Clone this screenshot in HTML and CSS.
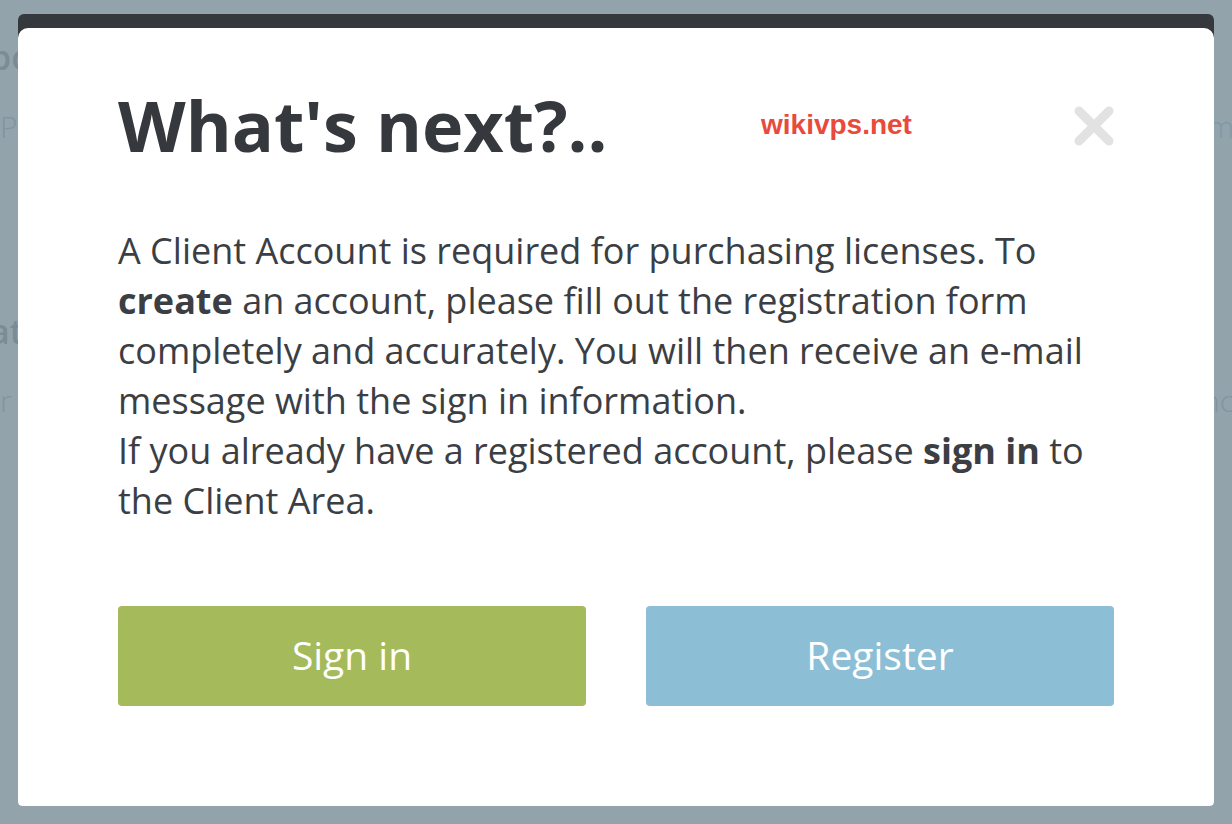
FILE: index.html
```html
<!DOCTYPE html>
<html>
<head>
  <title>What's next?</title>
  <link rel="stylesheet" href="styles.css">
</head>
<body>
  <div class="page">
    <div class="page-row row-1"><span class="bold shift">bo</span><span></span></div>
    <div class="page-row row-2"><span class="light">PA</span><span class="light blue">m</span></div>
    <div class="page-row row-3"><span class="bold shift">at</span><span></span></div>
    <div class="page-row row-4"><span class="light">r h</span><span class="light">nc</span></div>
  </div>

  <div class="overlay">
    <div class="modal">
      <div class="modal-body">
        <div class="modal-head">
          <h1>What's next?..</h1>
          <span class="watermark">wikivps.net</span>
          <a class="close" href="#" aria-label="Close">
            <svg width="40" height="40" viewBox="0 0 40 40">
              <path d="M5 5 L35 35 M35 5 L5 35" stroke="#e2e2e2" stroke-width="9" stroke-linecap="round" fill="none"/>
            </svg>
          </a>
        </div>
        <p class="text">
          A Client Account is required for purchasing licenses. To <b>create</b> an account, please fill out the registration form completely and accurately. You will then receive an e-mail message with the sign in information.<br>
          If you already have a registered account, please <b>sign in</b> to the Client Area.
        </p>
        <div class="actions">
          <a href="#" class="btn btn-green">Sign in</a>
          <a href="#" class="btn btn-blue">Register</a>
        </div>
      </div>
    </div>
  </div>
</body>
</html>
```

FILE: styles.css
```css
body {
  margin: 0;
  padding: 0;
  background-color: #92a3ab;
  font-family: "Open Sans", Arial, sans-serif;
  height: 824px;
  overflow: hidden;
}
.page {
  color: #7c8c94;
  font-size: 30px;
}
.page-row {
  display: flex;
  justify-content: space-between;
  margin-left: 0;
  margin-right: -2px;
  line-height: 40px;
}
.row-1 { padding-top: 37px; }
.row-2 { padding-top: 30px; }
.row-3 { padding-top: 164px; }
.row-4 { padding-top: 30px; }
.bold { font-weight: 600; font-size: 34px; }
.shift { margin-left: -10px; }
.light { font-weight: 300; color: #8393a0; }
.blue { color: #7f98a8; }

.overlay {
  position: absolute;
  top: 14px;
  left: 18px;
  width: 1196px;
}
.modal {
  background-color: #35383d;
  border-radius: 6px 6px 4px 4px;
  padding-top: 14px;
}
.modal-body {
  background-color: #fff;
  border-radius: 10px 10px 4px 4px;
  padding: 55px 100px 100px 100px;
}
.modal-head {
  position: relative;
  display: flex;
  justify-content: space-between;
  align-items: flex-start;
}
.modal-head h1 {
  margin: 0;
  font-size: 70px;
  line-height: 84px;
  font-weight: 700;
  color: #35383d;
}
.watermark {
  position: absolute;
  left: 643px;
  top: 26px;
  font-family: "Liberation Sans", Arial, sans-serif;
  font-weight: 700;
  font-size: 28px;
  color: #e84a3c;
}
.close {
  display: block;
  width: 40px;
  height: 40px;
  margin-top: 23px;
}
.close svg {
  display: block;
}
.text {
  margin: 59px 0 0 0;
  font-size: 36px;
  line-height: 50px;
  color: #3b3e43;
}
.text b {
  font-weight: 700;
}
.actions {
  display: grid;
  grid-template-columns: 1fr 1fr;
  gap: 60px;
  margin-top: 80px;
}
.btn {
  display: block;
  height: 100px;
  line-height: 98px;
  text-align: center;
  border-radius: 4px;
  color: #fff;
  font-size: 39px;
  text-decoration: none;
}
.btn-green {
  background-color: #a5ba5a;
}
.btn-blue {
  background-color: #8cbfd5;
}
```
